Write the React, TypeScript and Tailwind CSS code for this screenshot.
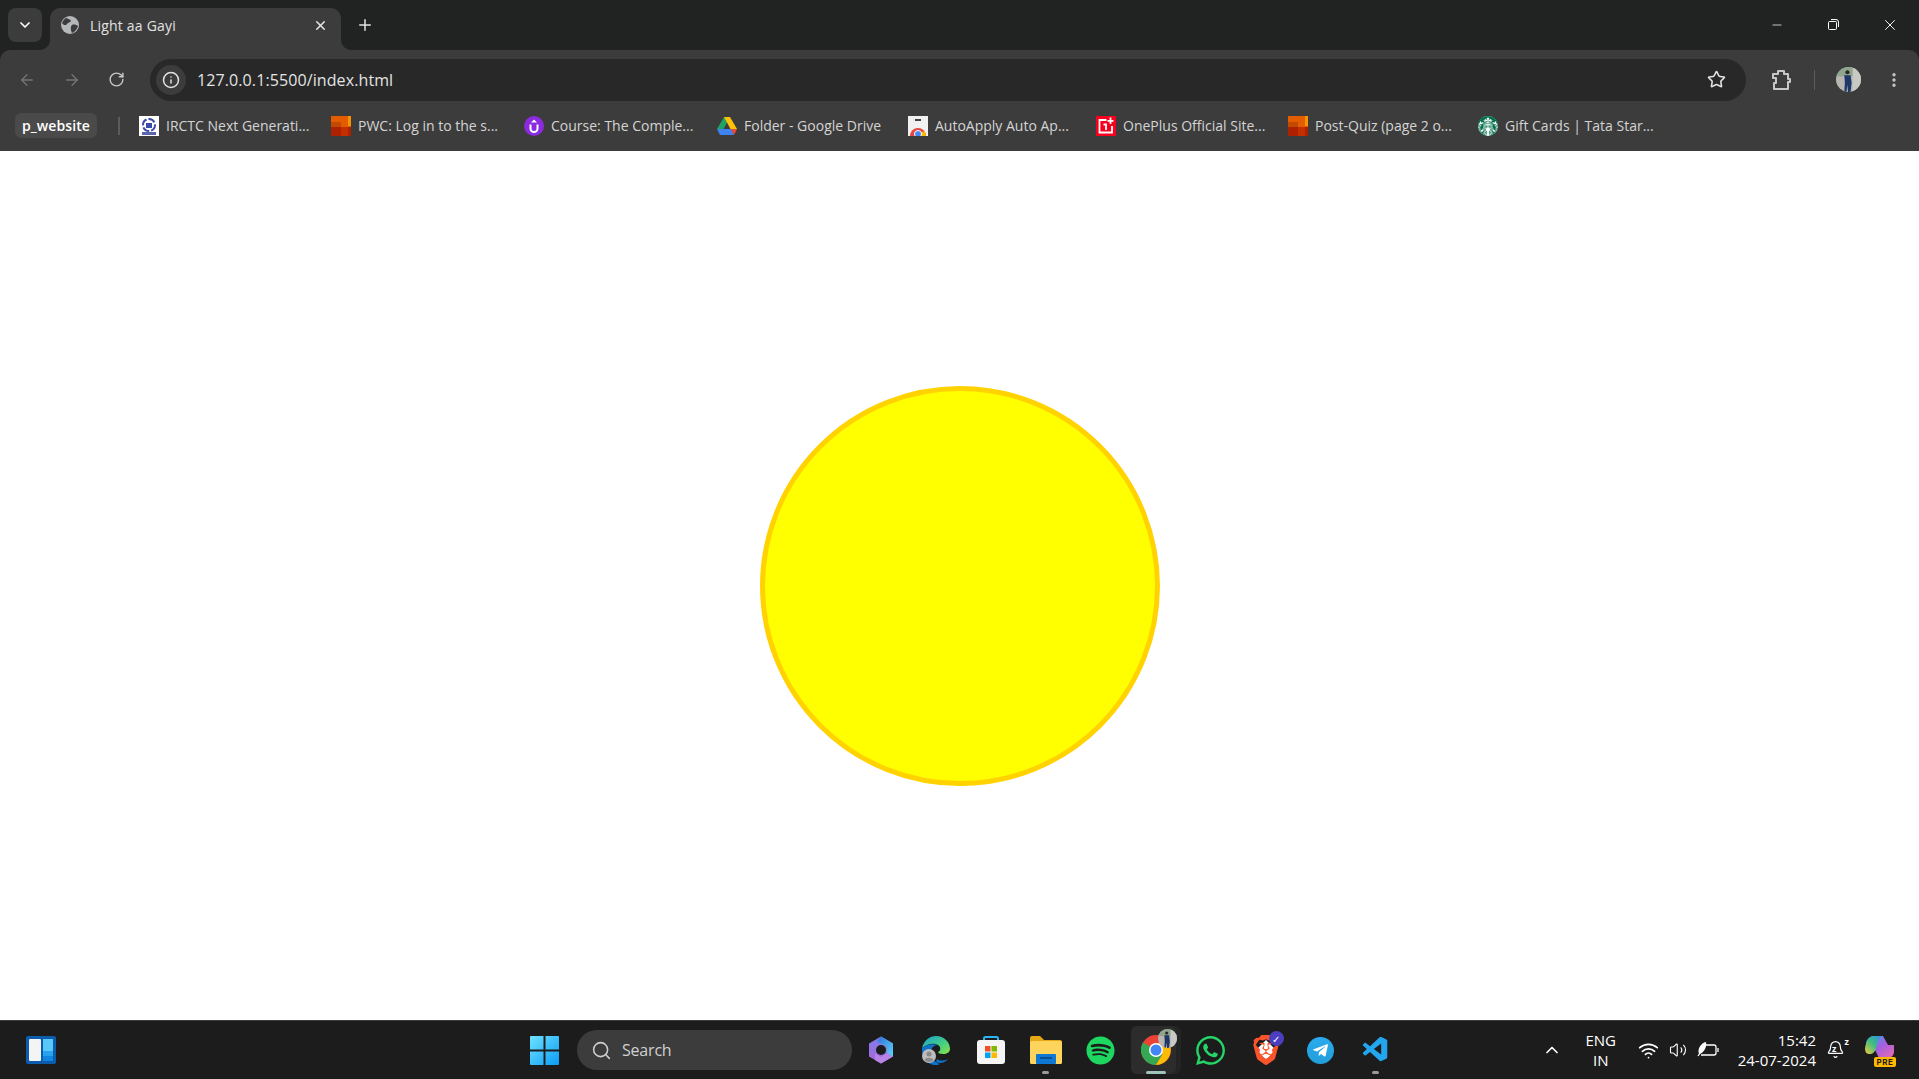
import { ArrowLeft, ArrowRight, RotateCw, Info, Star, EllipsisVertical, X, Plus, ChevronDown, ChevronUp, Minus, Search, Wifi, Volume2, Bell } from "lucide-react";
import { FaSpotify, FaWhatsapp, FaTelegramPlane } from "react-icons/fa";
import { SiStarbucks, SiBrave } from "react-icons/si";
import { VscVscode } from "react-icons/vsc";

function BlockIcon() {
  return (
    <svg width="20" height="20" viewBox="0 0 20 20">
      <rect width="20" height="20" fill="#e35d00" />
      <rect x="17" width="3" height="10" fill="#f59300" />
      <rect y="6" width="10" height="5" fill="#c24a00" />
      <rect y="11" width="20" height="9" fill="#ad2000" />
      <rect x="10" y="11" width="7" height="9" fill="#c42f00" />
    </svg>
  );
}

function IrctcIcon() {
  return (
    <svg width="20" height="20" viewBox="0 0 20 20">
      <rect width="20" height="20" fill="#fff" />
      <circle cx="10" cy="9" r="6" fill="none" stroke="#3c4aa8" strokeWidth="2" strokeDasharray="7 2" />
      <rect x="7" y="7" width="6" height="5" fill="#3c4aa8" />
      <rect x="3" y="16" width="14" height="3" fill="#5a64b0" />
    </svg>
  );
}

function CourseIcon() {
  return (
    <svg width="20" height="20" viewBox="0 0 20 20">
      <circle cx="10" cy="10" r="10" fill="#8a2be2" />
      <path d="M6.500 8.500v4a3.500 3.500 0 0 0 7 0v-4" fill="none" stroke="#fff" strokeWidth="2" />
      <path d="M10 3.500 13 6.500H7z" fill="#fff" />
    </svg>
  );
}

function DriveIcon() {
  return (
    <svg width="20" height="18" viewBox="0 0 20 18">
      <path d="M7 0h6L6.500 12H0z" fill="#1ea362" />
      <path d="M7 0h6l7 12h-6.500z" fill="#ffc107" />
      <path d="M6.500 12H0l3 6h7z" fill="#3f83f0" />
      <path d="M6.500 12H14l3 6H3z" fill="#3f83f0" />
      <path d="M13.500 12H20l-3 6z" fill="#e64a3b" />
    </svg>
  );
}

function AutoApplyIcon() {
  return (
    <svg width="20" height="20" viewBox="0 0 20 20">
      <rect width="20" height="20" fill="#f1f1f1" />
      <rect x="7" y="3" width="6" height="2" fill="#444" />
      <path d="M2 20a8 8 0 0 1 16 0z" fill="#e8453c" />
      <path d="M10 20h8a8 8 0 0 0-1.500-4.700L10 17z" fill="#fbbc04" />
      <circle cx="10" cy="18" r="3.500" fill="#4285f4" stroke="#fff" />
    </svg>
  );
}

function OnePlusIcon() {
  return (
    <svg width="20" height="20" viewBox="0 0 20 20">
      <rect width="20" height="20" fill="#f5001e" />
      <path d="M10.500 4H3.500v12.500H16V10" fill="none" stroke="#fff" strokeWidth="1.800" />
      <path d="M14.500 1.500v6.500M11.500 4.800h6" stroke="#fff" strokeWidth="1.800" />
      <path d="M7.500 8.500h2.500v5.500" fill="none" stroke="#fff" strokeWidth="1.800" />
    </svg>
  );
}

function StarbucksIcon() {
  return (
    <span className="flex h-5 w-5 items-center justify-center rounded-full bg-white">
      <SiStarbucks size={20} color="#00704a" />
    </span>
  );
}

const bookmarks = [
  { icon: <IrctcIcon />, label: "IRCTC Next Generati...", width: "w-[192px]" },
  { icon: <BlockIcon />, label: "PWC: Log in to the s...", width: "w-[193px]" },
  { icon: <CourseIcon />, label: "Course: The Comple...", width: "w-[193px]" },
  { icon: <DriveIcon />, label: "Folder - Google Drive", width: "w-[191px]" },
  { icon: <AutoApplyIcon />, label: "AutoApply Auto Ap...", width: "w-[188px]" },
  { icon: <OnePlusIcon />, label: "OnePlus Official Site...", width: "w-[192px]" },
  { icon: <BlockIcon />, label: "Post-Quiz (page 2 o...", width: "w-[190px]" },
  { icon: <StarbucksIcon />, label: "Gift Cards | Tata Star...", width: "w-[190px]" },
];

function GlobeFavicon() {
  return (
    <svg width="18" height="18" viewBox="0 0 18 18">
      <circle cx="9" cy="9" r="9" fill="#b4b8b8" />
      <path d="M5 2c2 1 4 1 5 3-1 2-3 1-4 3S2 9 1 7c1-2 2-4 4-5zM11 9c2-1 5 0 6 1-1 3-3 6-6 7-1-2-2-6 0-8z" fill="#3c3c3c" />
    </svg>
  );
}

function TabFlare({ flip }: { flip?: boolean }) {
  return (
    <svg className={flip ? "absolute right-[-10px] bottom-0" : "absolute bottom-0 left-[-10px]"} width="10" height="10" viewBox="0 0 10 10">
      <path d={flip ? "M0 0a10 10 0 0 0 10 10H0z" : "M10 0a10 10 0 0 1-10 10h10z"} fill="#3c3c3c" />
    </svg>
  );
}

function PuzzleIcon() {
  return (
    <svg width="22" height="22" viewBox="0 0 22 22" fill="none" stroke="#c7c7c7" strokeWidth="2" strokeLinejoin="round">
      <path d="M3 5h5V2h6v3h4v5h2v3h-2v7H4v-6h2V9H3z" />
    </svg>
  );
}

function Avatar({ size }: { size: number }) {
  return (
    <svg width={size} height={size} viewBox="0 0 24 24">
      <defs>
        <clipPath id={`av${size}`}><circle cx="12" cy="12" r="12" /></clipPath>
      </defs>
      <g clipPath={`url(#av${size})`}>
        <rect width="24" height="24" fill="#b9b6b2" />
        <rect width="24" height="9" fill="#8fa58e" />
        <rect x="16" width="8" height="24" fill="#c9c9c4" />
        <circle cx="11" cy="5" r="2" fill="#2b2622" />
        <path d="M8 8h6l1 7-1 9h-2.500l-.5-7-1 7H8l.5-9z" fill="#1d3768" />
      </g>
    </svg>
  );
}

function WidgetsIcon() {
  return (
    <svg width="30" height="28" viewBox="0 0 30 28">
      <rect width="30" height="28" rx="2" fill="#0b5cad" />
      <rect x="3" y="3" width="12" height="22" rx="1" fill="#f4f4f4" />
      <rect x="17" y="3" width="10" height="12" fill="#58c8f7" />
      <rect x="17" y="15" width="10" height="5" fill="#27a3ee" />
      <rect x="17" y="20" width="10" height="5" fill="#0f86e0" />
    </svg>
  );
}

function WindowsIcon() {
  return (
    <svg width="29" height="29" viewBox="0 0 29 29">
      <defs>
        <linearGradient id="win" x1="0" y1="0" x2="1" y2="1">
          <stop offset="0" stopColor="#6fe3ff" />
          <stop offset="1" stopColor="#0a9cf5" />
        </linearGradient>
      </defs>
      <path d="M0 1a1 1 0 0 1 1-1h12.500v13.500H0zM15.500 0H28a1 1 0 0 1 1 1v12.500H15.500zM0 15.500h13.500V29H1a1 1 0 0 1-1-1zM15.500 15.500H29V28a1 1 0 0 1-1 1H15.500z" fill="url(#win)" />
    </svg>
  );
}

function CopilotIcon() {
  return (
    <svg width="28" height="28" viewBox="0 0 28 28">
      <defs>
        <linearGradient id="copa" x1="0" y1="0" x2="0" y2="1">
          <stop offset="0" stopColor="#7f7ce8" />
          <stop offset="1" stopColor="#a868dc" />
        </linearGradient>
        <linearGradient id="copb" x1="0" y1="0" x2="1" y2="1">
          <stop offset="0" stopColor="#2f6fd8" />
          <stop offset="1" stopColor="#5ad8fa" />
        </linearGradient>
      </defs>
      <path d="M14 0.500 26 7.500v13L14 27.500 2 20.500v-13z" fill="url(#copa)" strokeLinejoin="round" />
      <path d="M14 0.500 26 7.500v13l-6-3.500v-6l-6-3.500-4-2z" fill="url(#copb)" />
      <path d="M8 17.500l6 3.500 6-3.500 6 3L14 27.500 8 24z" fill="#b884e6" />
      <circle cx="14" cy="14" r="5" fill="#1c1c1c" />
    </svg>
  );
}

function EdgeIcon() {
  return (
    <svg width="30" height="30" viewBox="0 0 30 30">
      <defs>
        <linearGradient id="edge" x1="0" y1="0" x2="1" y2="1">
          <stop offset="0" stopColor="#1aa0d8" />
          <stop offset="0.6" stopColor="#45d07e" />
          <stop offset="1" stopColor="#8ee04a" />
        </linearGradient>
      </defs>
      <path d="M1 13C3 5 9 1 15 1c8 0 14 6 14 13 0 3-3 5-7 5-3 0-5-1-5-2 3-1 3-5 0-7-5-3-12 0-16 3z" fill="url(#edge)" />
      <path d="M1 13c4-3 11-5 15-3-5 1-7 5-6 10 1 4 5 8 9 9-2 1-3 1-5 1C7 30 0 23 1 13z" fill="#0f73c7" />
      <path d="M15 27c4 2 9 1 12-3-4 2-8 2-11 0z" fill="#0f73c7" />
      <circle cx="8" cy="21" r="7" fill="#bdbdbd" />
      <circle cx="8" cy="19" r="2.500" fill="#8a8a8a" />
      <path d="M3.500 25c1-3 8-3 9 0a6 6 0 0 1-9 0z" fill="#8a8a8a" />
    </svg>
  );
}

function StoreIcon() {
  return (
    <svg width="30" height="30" viewBox="0 0 30 30">
      <path d="M8 8V3.500a1.500 1.500 0 0 1 1.500-1.500h11a1.500 1.500 0 0 1 1.500 1.500V8" fill="none" stroke="#29b6f6" strokeWidth="2" />
      <rect x="1" y="5" width="28" height="24" rx="3" fill="#f5f5f5" />
      <rect x="9" y="11" width="5.500" height="5.500" fill="#f25022" />
      <rect x="15.500" y="11" width="5.500" height="5.500" fill="#7fba00" />
      <rect x="9" y="17.500" width="5.500" height="5.500" fill="#00a4ef" />
      <rect x="15.500" y="17.500" width="5.500" height="5.500" fill="#ffb900" />
    </svg>
  );
}

function FolderIcon() {
  return (
    <svg width="32" height="28" viewBox="0 0 32 28">
      <path d="M0 2a2 2 0 0 1 2-2h8l4 4h16a2 2 0 0 1 2 2v4H0z" fill="#e8a815" />
      <rect y="5" width="32" height="23" rx="1.500" fill="#ffd45c" />
      <rect x="6" y="18" width="20" height="10" rx="1" fill="#0f78d4" />
      <rect x="10" y="21" width="12" height="2" fill="#0a4e91" />
    </svg>
  );
}

function ChromeIcon() {
  return (
    <svg width="30" height="30" viewBox="0 0 30 30">
      <circle cx="15" cy="15" r="15" fill="#ea4335" />
      <path d="M15 15 2 7.500A15 15 0 0 0 15 30l6.500-11z" fill="#34a853" />
      <path d="M15 8h13a15 15 0 0 1-13 22l6.500-11z" fill="#fbbc04" />
      <circle cx="15" cy="15" r="7" fill="#fff" />
      <circle cx="15" cy="15" r="5.500" fill="#4285f4" />
    </svg>
  );
}

function BatteryLeafIcon() {
  return (
    <svg width="22" height="18" viewBox="0 0 22 18" fill="none" stroke="#fff" strokeWidth="1.300">
      <path d="M8 4h9a2 2 0 0 1 2 2v6a2 2 0 0 1-2 2H4" />
      <path d="M21 7v4" />
      <path d="M1 15 8 5" />
      <path d="M2 13C0 8 4 2 9 1c1 5-2 11-7 12z" fill="#fff" stroke="none" />
    </svg>
  );
}

function CopilotPreIcon() {
  return (
    <div className="relative h-[30px] w-[30px]">
      <svg width="30" height="24" viewBox="0 0 30 24">
        <defs>
          <linearGradient id="pre1" x1="0" y1="1" x2="1" y2="0">
            <stop offset="0" stopColor="#f5c842" />
            <stop offset="0.5" stopColor="#3fc07a" />
            <stop offset="1" stopColor="#2b8bf0" />
          </linearGradient>
          <linearGradient id="pre2" x1="0" y1="0" x2="1" y2="1">
            <stop offset="0" stopColor="#2bb0f0" />
            <stop offset="0.500" stopColor="#a25fe0" />
            <stop offset="1" stopColor="#ec6bb0" />
          </linearGradient>
        </defs>
        <path d="M9 1h9l5 9h6v7a6 6 0 0 1-6 6h-9l-4-8H1V9a8 8 0 0 1 8-8z" fill="url(#pre2)" />
        <path d="M9 1h8c-3 1-5 6-6 12-1 4-3 6-6 6H4C1 19 0 16 0 13 1 7 4 1 9 1z" fill="url(#pre1)" />
      </svg>
      <span className="absolute right-[-1px] bottom-[-2px] w-[22px] rounded-[2px] bg-[#ffb900] text-center font-['Inter',sans-serif] text-[8px] leading-[10px] font-bold tracking-[0.5px] text-[#1c1c1c]">PRE</span>
    </div>
  );
}

function SnoozeBell() {
  return (
    <div className="relative h-[20px] w-[20px]">
      <Bell size={19} strokeWidth={1.5} />
      <span className="absolute top-[4px] left-[6px] text-[9px] leading-[9px] font-bold">z</span>
      <span className="absolute top-[-3px] right-[-3px] text-[9px] leading-[9px] font-bold">z</span>
    </div>
  );
}

function TaskbarSlot({ children, mark }: { children: React.ReactNode; mark?: "small" | "active" }) {
  return (
    <div className="relative flex h-[48px] w-[55px] items-center justify-center">
      {mark === "active" && <span className="absolute top-0 right-[2px] bottom-0 left-[3px] rounded-md bg-[#242424]" />}
      {mark === "active" && <span className="absolute top-0 right-[7px] bottom-0 left-[3px] rounded-md bg-[#2c2c2c]" />}
      <span className="relative flex">{children}</span>
      {mark === "small" && <span className="absolute bottom-0 h-[3px] w-[7px] rounded-full bg-[#9a9a9a]" />}
      {mark === "active" && <span className="absolute bottom-0 h-[3px] w-[20px] rounded-full bg-[#9fc4bb]" />}
    </div>
  );
}

export default function App() {
  return (
    <div className="flex h-screen w-full flex-col overflow-hidden bg-white font-['Open_Sans','Noto_Sans',sans-serif]">
      <div className="shrink-0 bg-[#212322]">
        {/* Tab strip */}
        <div className="flex h-[50px] pt-2 pl-2 text-white">
          <div className="flex h-[34px] w-[34px] items-center justify-center rounded-lg bg-[#3c3c3c]">
            <ChevronDown size={16} strokeWidth={2.5} />
          </div>
          <div className="relative ml-2 flex h-[42px] w-[291px] items-center rounded-t-[10px] bg-[#3c3c3c] pr-[13px] pb-[8px] pl-[11px]">
            <TabFlare />
            <TabFlare flip />
            <GlobeFavicon />
            <span className="ml-[11px] flex-1 text-[14px] tracking-[0.2px] text-[#e3e3e3]">Light aa Gayi</span>
            <X size={15} strokeWidth={2.5} className="text-[#e3e3e3]" />
          </div>
          <div className="ml-[15px] flex h-[34px] items-center">
            <Plus size={18} strokeWidth={2} className="text-[#e3e3e3]" />
          </div>
          <div className="ml-auto flex h-[34px] items-center pr-[20px]">
            <Minus size={14} strokeWidth={1.25} />
            <svg className="ml-[42px]" width="14" height="14" viewBox="0 0 14 14" fill="none" stroke="#fff">
              <rect x="2.500" y="3.500" width="8" height="8" rx="1" />
              <path d="M5 1.500h5a2.500 2.500 0 0 1 2.500 2.500v5" />
            </svg>
            <X size={18} strokeWidth={1.25} className="ml-[41px]" />
          </div>
        </div>

        {/* Toolbar */}
        <div className="flex h-[59px] items-center rounded-t-[10px] bg-[#3c3c3c] text-[#c7c7c7]">
          <div className="flex w-[150px] items-center pl-[18px]">
            <ArrowLeft size={18} strokeWidth={1.75} className="text-[#757575]" />
            <ArrowRight size={18} strokeWidth={1.75} className="ml-[27px] text-[#757575]" />
            <RotateCw size={17} strokeWidth={2} className="ml-[27px]" />
          </div>
          <div className="flex h-[42px] w-[1596px] items-center rounded-full bg-[#282828] pr-[20px] pl-[6px]">
            <span className="flex h-[30px] w-[30px] items-center justify-center rounded-full bg-[#3c3c3c]">
              <Info size={18} strokeWidth={2} className="text-[#e3e3e3]" />
            </span>
            <span className="ml-[11px] flex-1 text-[16px] tracking-[0.1px] text-[#e3e3e3]">127.0.0.1:5500/index.html</span>
            <Star size={19} strokeWidth={2} className="text-[#e3e3e3]" />
          </div>
          <span className="ml-[24px] flex"><PuzzleIcon /></span>
          <span className="ml-[22px] h-[20px] w-px bg-[#5c5c5c]" />
          <span className="ml-[21px] flex"><Avatar size={25} /></span>
          <EllipsisVertical size={18} strokeWidth={2.5} className="ml-[24px]" />
        </div>
      </div>

      {/* Bookmarks bar */}
      <div className="flex h-[42px] shrink-0 items-start bg-[#3c3c3c] pt-[4px] pl-[15px] text-[14px] text-[#d4d4d4]">
        <span className="flex h-[25px] w-[82px] items-center justify-center rounded-md bg-[#4a4a4a] font-semibold tracking-[0.1px] text-white">p_website</span>
        <span className="mt-[4px] mr-[19px] ml-[21px] h-[18px] w-[2px] bg-[#5c5c5c]" />
        {bookmarks.map((b) => (
          <div key={b.label} className={`flex h-[25px] shrink-0 items-center gap-[7px] whitespace-nowrap ${b.width}`}>
            {b.icon}
            <span>{b.label}</span>
          </div>
        ))}
      </div>

      {/* Page */}
      <main className="flex flex-1 items-center justify-center bg-white">
        <div className="h-[400px] w-[400px] rounded-full border-[5px] border-[#ffd200] bg-[#ffff00]" />
      </main>

      {/* Taskbar */}
      <div className="flex h-[59px] shrink-0 items-center border-t border-[#3a3a3a] bg-[#1c1c1c] text-white">
        <div className="ml-[26px] flex"><WidgetsIcon /></div>
        <div className="ml-[474px] flex"><WindowsIcon /></div>
        <div className="ml-[18px] flex h-[40px] w-[275px] items-center rounded-full bg-[#3c3c3c] pl-[14px] text-[#d0d0d0]">
          <Search size={21} strokeWidth={1.75} />
          <span className="ml-[10px] text-[16px] tracking-[-0.2px]">Search</span>
        </div>
        <div className="ml-[1px] flex items-center">
          <TaskbarSlot><CopilotIcon /></TaskbarSlot>
          <TaskbarSlot><EdgeIcon /></TaskbarSlot>
          <TaskbarSlot><StoreIcon /></TaskbarSlot>
          <TaskbarSlot mark="small"><FolderIcon /></TaskbarSlot>
          <TaskbarSlot><FaSpotify size={29} color="#1ed760" /></TaskbarSlot>
          <TaskbarSlot mark="active">
            <ChromeIcon />
            <span className="absolute top-[-6px] right-[-6px] flex"><Avatar size={19} /></span>
          </TaskbarSlot>
          <TaskbarSlot><FaWhatsapp size={33} color="#25d366" /></TaskbarSlot>
          <TaskbarSlot>
            <span className="absolute top-[8px] left-[8px] h-[14px] w-[14px] rotate-45 bg-white" />
            <SiBrave size={30} color="#fb542b" className="relative" />
            <span className="absolute top-[-4px] right-[-3px] flex h-[15px] w-[15px] items-center justify-center rounded-full bg-[#4b3fbf] text-[10px] leading-none text-white">✓</span>
          </TaskbarSlot>
          <TaskbarSlot>
            <span className="flex h-[27px] w-[27px] items-center justify-center rounded-full bg-[linear-gradient(180deg,#2aabee,#229ed9)]">
              <FaTelegramPlane size={17} color="#fff" />
            </span>
          </TaskbarSlot>
          <TaskbarSlot mark="small"><VscVscode size={30} color="#23a5f0" /></TaskbarSlot>
        </div>
        <div className="ml-auto flex items-center pr-[24px]">
          <ChevronUp size={20} strokeWidth={2} />
          <div className="ml-[22px] w-[34px] text-center text-[15px] leading-[20px]">ENG<br />IN</div>
          <Wifi size={21} strokeWidth={2} className="ml-[20px]" />
          <Volume2 size={18} strokeWidth={1.5} className="ml-[10px]" />
          <div className="ml-[10px] flex"><BatteryLeafIcon /></div>
          <div className="ml-[19px] text-right text-[15px] leading-[20px]">15:42<br />24-07-2024</div>
          <div className="ml-[10px]"><SnoozeBell /></div>
          <div className="ml-[19px]"><CopilotPreIcon /></div>
        </div>
      </div>
    </div>
  );
}
